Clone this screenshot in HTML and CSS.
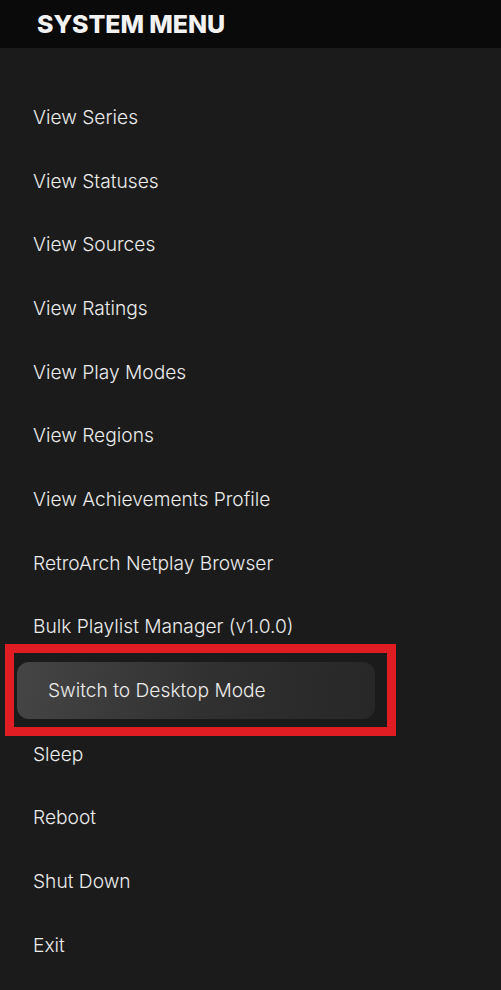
FILE: index.html
```html
<!DOCTYPE html>
<html>

<head>
    <title>System Menu</title>
    <link rel="stylesheet" href="styles.css">
</head>

<body>
    <div class="header">
        <h1>SYSTEM MENU</h1>
    </div>
    <ul class="menu">
        <li>View Series</li>
        <li>View Statuses</li>
        <li>View Sources</li>
        <li>View Ratings</li>
        <li>View Play Modes</li>
        <li>View Regions</li>
        <li>View Achievements Profile</li>
        <li>RetroArch Netplay Browser</li>
        <li>Bulk Playlist Manager (v1.0.0)</li>
        <li class="selected">
            <span class="pill">Switch to Desktop Mode</span>
            <span class="highlight"></span>
        </li>
        <li>Sleep</li>
        <li>Reboot</li>
        <li>Shut Down</li>
        <li>Exit</li>
    </ul>
</body>

</html>
```
FILE: styles.css
```css
body {
    margin: 0;
    background-color: #1b1b1b;
    font-family: 'Inter', 'Noto Sans', sans-serif;
    color: #ececec;
}

.header {
    height: 48px;
    background-color: #0a0a0a;
    display: flex;
    align-items: center;
    padding-left: 37px;
}

.header h1 {
    margin: 0;
    font-size: 25px;
    font-weight: 800;
    color: #f2f2f2;
    letter-spacing: -0.1px;
}

.menu {
    list-style: none;
    margin: 0;
    padding: 37px 0 0 17px;
}

.menu li {
    height: 63.7px;
    display: flex;
    align-items: center;
    padding-left: 16px;
    font-size: 19.2px;
    font-weight: 300;
}

.menu li.selected {
    position: relative;
    padding-left: 0;
}

.pill {
    display: flex;
    align-items: center;
    width: 327px;
    height: 57px;
    padding-left: 31px;
    border-radius: 12px;
    background: linear-gradient(100deg, #454545 0%, #303030 55%, #272727 100%);
}

.highlight {
    position: absolute;
    left: -12px;
    top: -14px;
    width: 373px;
    height: 74px;
    border: 9px solid #e01d22;
}
```
